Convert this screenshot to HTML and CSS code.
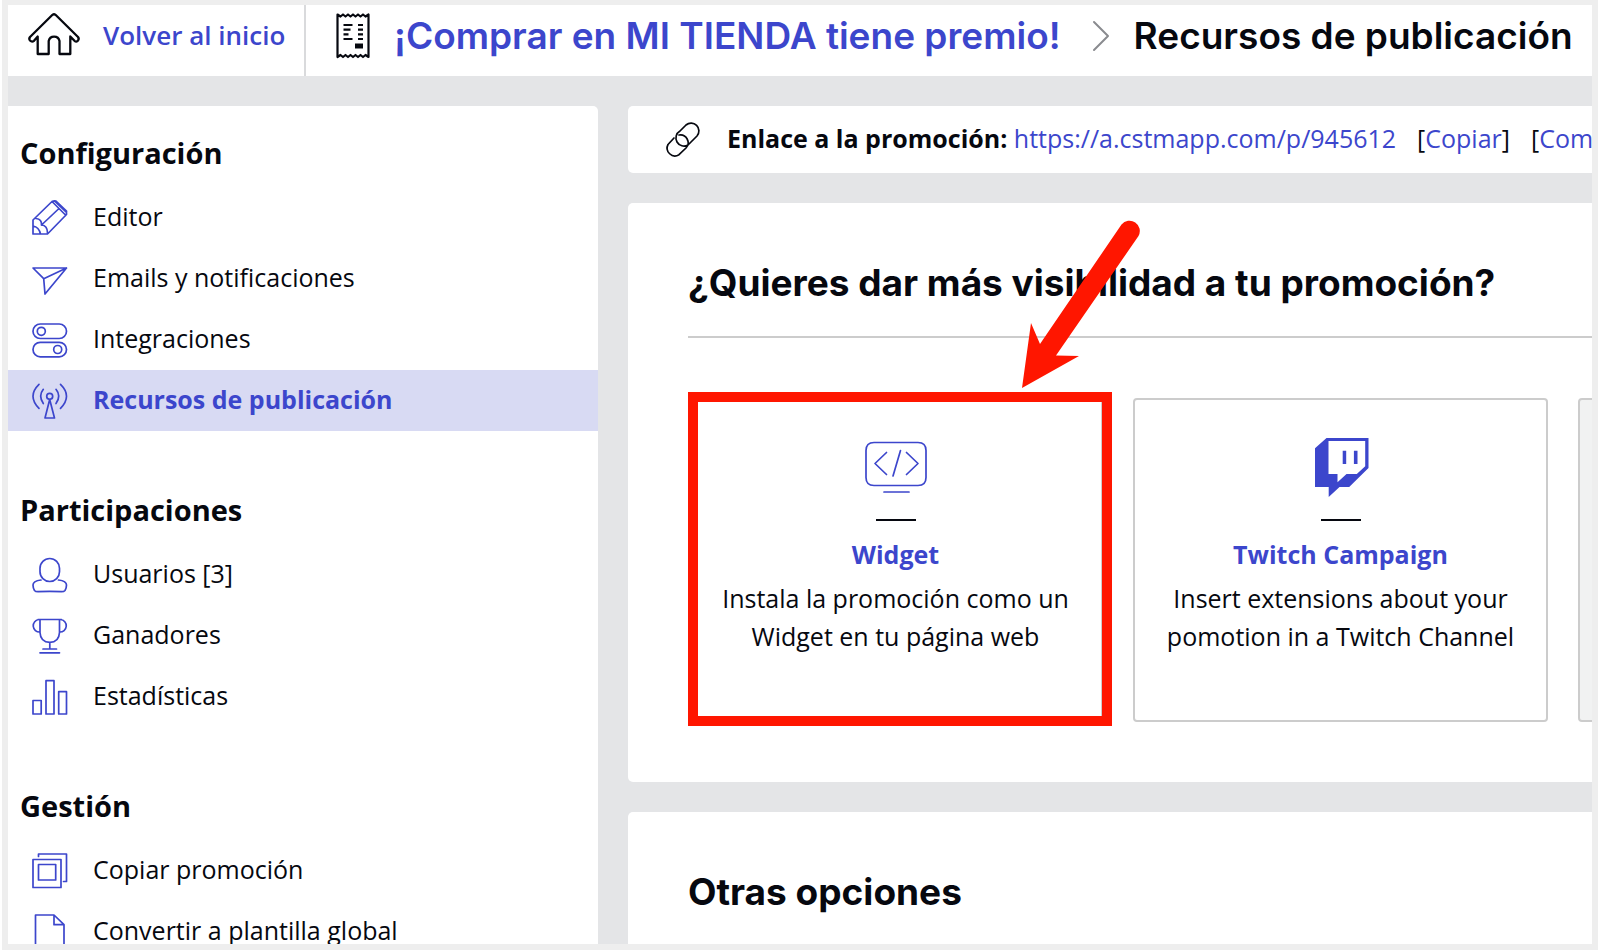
FILE: index.html
```html
<!DOCTYPE html>
<html lang="es">
<head>
<meta charset="utf-8">
<title>Recursos de publicación</title>
<link rel="stylesheet" href="styles.css">
</head>
<body>
<div class="window">
  <header class="topbar">
    <a class="back" href="#">
      <svg class="icon-home" viewBox="0 0 52 43"><path d="M24.5 1.8 2 24Q.6 26 2 27.5 4 29.5 6 27.8L9.7 23.5V41H20.7V28A5.5 5.5 0 0 1 31.5 28V41H42.3V23.5L46.5 27.8Q48.5 29.5 50 27.5 51.4 26 50 24L27.5 1.8Q26 .6 24.5 1.8Z"/></svg>
      <span>Volver al inicio</span>
    </a>
    <nav class="crumbs" aria-label="Ruta">
      <svg class="icon-receipt" viewBox="0 0 34 46"><path d="M1.5 1.5 4.5 3.5 7 1.5 9.5 3.5 12 1.5 14.5 3.5 17 1.5 19.5 3.5 22 1.5 24.5 3.5 27 1.5 29.5 3.5 32.5 1.5V44L29.5 42 27 44 24.5 42 22 44 19.5 42 17 44 14.5 42 12 44 9.5 42 7 44 4.5 42 1.5 44Z"/><path d="M7.5 12h9M7.5 16.700h7M7.5 21.300h5M7.5 26h9M22 12h5M22 16.700h5M22 21.300h5M22 26h5"/><path class="solid" d="M19 30.500h8v5h-8z"/></svg>
      <a href="#">¡Comprar en MI TIENDA tiene premio!</a>
      <svg class="icon-chevron" viewBox="0 0 16 30"><path d="M1 1 15 15 1 29"/></svg>
      <span>Recursos de publicación</span>
    </nav>
  </header>

  <div class="body">
    <nav class="sidebar" aria-label="Promoción">
      <section>
        <h2>Configuración</h2>
        <a class="item" href="#"><svg viewBox="0 0 36 36"><path d="M1 20 20 1.500Q22 .5 24 1L34.500 11V14.500L15.500 34H1ZM20 1.500 33.500 15M22.500 1 34.500 12.500M27 8.500 9.500 25M4 18.500Q10 19 9.500 25 15.500 25.500 15.500 33M1 26Q7 27 8.500 34"/></svg><span>Editor</span></a>
        <a class="item" href="#"><svg viewBox="0 0 36 36"><path d="M1 7H34.500L13 33 11.700 17.700ZM11.700 17.700 34.500 7"/></svg><span>Emails y notificaciones</span></a>
        <a class="item" href="#"><svg viewBox="0 0 36 36"><rect x="1" y="2" width="33.500" height="14.500" rx="7.250"/><rect x="1" y="20.300" width="33.500" height="14.500" rx="7.250"/><circle cx="9.300" cy="9.300" r="4"/><circle cx="25.700" cy="27.500" r="4"/></svg><span>Integraciones</span></a>
        <a class="item active" href="#" aria-current="page"><svg viewBox="0 0 36 36"><circle cx="17.700" cy="13.300" r="3"/><path d="M17.700 16.500 13 35H22.500ZM7 1.300Q-5 13 7 25.300M11.300 6.300Q6 13 11.300 20.500M28.500 1.300Q40.500 13 28.500 25.300M24 6.300Q29.500 13 24 20.500"/></svg><span>Recursos de publicación</span></a>
      </section>
      <section>
        <h2>Participaciones</h2>
        <a class="item" href="#"><svg viewBox="0 0 36 36"><rect x="8" y="1.500" width="19.500" height="23" rx="9.750"/><path d="M9 23Q1 24 1 28 1 31 2.500 33.500 3.500 34.700 6 34.700 17.500 34 29.500 34.700 32 34.700 33 33.500 34.500 31 34.500 28 34.500 24 26.500 23"/></svg><span>Usuarios [3]</span></a>
        <a class="item" href="#"><svg viewBox="0 0 36 36"><path d="M6 1.500H29.500M8 1.500V14.500Q8.500 24.300 17.800 24.300 27 24.300 27.500 14.500V1.500M7 1.500A6.200 6.200 0 0 0 8 14M28.500 1.500A6.200 6.200 0 0 1 27.500 14M17.800 24.300V31M11 31H24.500M8 34.800H27.500"/></svg><span>Ganadores</span></a>
        <a class="item" href="#"><svg viewBox="0 0 36 36"><path d="M1 21.500H9.200V35H1ZM14 1.700H22V35H14ZM26.700 12.700H34.500V35H26.700Z"/></svg><span>Estadísticas</span></a>
      </section>
      <section>
        <h2>Gestión</h2>
        <a class="item" href="#"><svg viewBox="0 0 36 36"><path d="M1 6.500H29V34.500H1ZM6.500 11.500H23.700V27H6.500ZM6.500 3.500V1H34.500V28.500H31.500"/></svg><span>Copiar promoción</span></a>
        <a class="item" href="#"><svg viewBox="0 0 36 36"><path d="M3.500 35V1H22L32 10.700V35ZM22 1V10.700H32"/></svg><span>Convertir a plantilla global</span></a>
      </section>
    </nav>

    <main class="main">
      <div class="panel link-panel">
        <svg viewBox="0 0 36 36"><path d="M15 9 21 3A7.800 7.800 0 0 1 32 14L23 23A7.800 7.800 0 0 1 15 9M9 16 3 22.500A7.800 7.800 0 0 0 14 32.700L21 26A7.800 7.800 0 0 0 14 13"/></svg>
        <p class="link-line">
          <span><strong>Enlace a la promoción:</strong> <a href="#">https://a.cstmapp.com/p/945612</a></span>
          <span>[<a href="#">Copiar</a>]</span>
          <span>[<a href="#">Compartir</a>]</span>
        </p>
      </div>

      <section class="panel">
        <h1 class="ruled">¿Quieres dar más visibilidad a tu promoción?</h1>
        <div class="cards">
          <a class="card marked" href="#">
            <svg class="pic" viewBox="0 0 64 64"><path d="M10 8.500H54Q62 8.500 62 16.500V43.500Q62 51.500 54 51.500H10Q2 51.500 2 43.500V16.500Q2 8.500 10 8.500ZM20 58H45M22.500 18.500 11 29.500 22.500 40.500M36.500 16.500 29 42M42.500 18.500 54 29.500 42.500 40.500"/></svg>
            <i class="dash"></i>
            <b>Widget</b>
            <span class="desc">Instala la promoción como un Widget en tu página web</span>
            <span class="highlight"></span>
            <svg class="arrow" viewBox="0 0 118 169"><path d="M0 168 9 103 18 124 99.500 4.500A10.300 10.300 0 0 1 116.500 16L34 135.500 57 136Z"/></svg>
          </a>
          <a class="card" href="#">
            <svg class="pic filled" viewBox="0 0 64 64"><path fill-rule="evenodd" d="M6 14.300 17.500 4H59.500V34L40.200 53H30.500L19.700 63V53H6ZM19.500 7V40H28.500V48.300L37.500 40H47.800L56.200 32.300V7ZM33.700 16.700H37.200V30H33.700ZM44.900 16.700H48.500V30H44.900Z"/></svg>
            <i class="dash"></i>
            <b>Twitch Campaign</b>
            <span class="desc">Insert extensions about your pomotion in a Twitch Channel</span>
          </a>
          <div class="card disabled"></div>
        </div>
      </section>

      <section class="panel">
        <h1>Otras opciones</h1>
      </section>
    </main>
  </div>
</div>
</body>
</html>
```
FILE: styles.css
```css
* { box-sizing: border-box; }

html { background: #fff; }

body {
  margin: 0;
  padding: 0 0 2px 2px;
  height: 100vh;
  overflow: hidden;
  font: 25px/38px "Open Sans", "Noto Sans", sans-serif;
  color: #06080f;
}

a { color: #3c46cc; text-decoration: none; }

svg {
  flex: none;
  display: block;
  overflow: visible;
  fill: none;
  stroke: currentColor;
  stroke-width: 1.7;
  stroke-linejoin: round;
  stroke-linecap: round;
}

.window {
  height: 100%;
  display: flex;
  flex-direction: column;
  border: 6px solid #eee;
  border-top-width: 5px;
  background: #e4e5e7;
  overflow: hidden;
}

.topbar {
  flex: none;
  display: flex;
  height: 71px;
  background: #fff;
  white-space: nowrap;
}

.back {
  flex: none;
  display: flex;
  align-items: center;
  gap: 23px;
  width: 298px;
  padding: 0 0 12px 20px;
  border-right: 2px solid #d9dadc;
  font-size: 26px;
  font-weight: 600;
}

.icon-home { width: 52px; height: 43px; color: #06080f; stroke-width: 2.3; }

.crumbs {
  display: flex;
  align-items: center;
  padding: 0 0 10px 30px;
  font: 600 37px/50px Inter, "Noto Sans", sans-serif;
}

.icon-receipt { width: 34px; height: 46px; margin-right: 24px; stroke-width: 2.2; stroke-linecap: butt; }
.icon-receipt .solid { fill: currentColor; stroke: none; }
.icon-chevron { width: 16px; height: 30px; margin: 0 25px 0 32px; color: #8a8b8f; stroke-width: 2; }

.body {
  flex: 1;
  min-height: 0;
  display: flex;
  gap: 30px;
  padding-top: 30px;
}

.sidebar {
  flex: none;
  width: 590px;
  display: flex;
  flex-direction: column;
  gap: 32px;
  background: #fff;
  border-radius: 0 5px 0 0;
}

.sidebar h2 {
  margin: 0;
  padding: 27px 12px 14px;
  font-size: 29px;
  line-height: 40px;
  font-weight: 700;
}

.item {
  display: flex;
  align-items: center;
  gap: 25px;
  height: 61px;
  padding-left: 24px;
  color: #06080f;
}

.item svg { width: 36px; height: 36px; color: #3c46cc; }
.item span { padding-bottom: 3px; }
.item.active { background: #d8daf3; color: #3c46cc; font-weight: 700; }

.main {
  flex: 1;
  min-width: 0;
  display: flex;
  flex-direction: column;
  gap: 30px;
}

.panel {
  flex: none;
  padding: 60px 0 60px 60px;
  background: #fff;
  border-radius: 5px 0 0 5px;
}

.link-panel {
  display: flex;
  align-items: center;
  gap: 26px;
  height: 67px;
  padding: 0 0 0 37px;
}

.link-panel svg { width: 36px; height: 36px; }

.link-line {
  margin: 0;
  padding-bottom: 3px;
  display: flex;
  gap: 21px;
  white-space: nowrap;
}

h1 {
  margin: 0;
  font: 700 37px/40px Inter, "Noto Sans", sans-serif;
  white-space: nowrap;
}

.ruled { padding-bottom: 33px; border-bottom: 2px solid #ccc; }

.cards {
  display: grid;
  grid-template-columns: repeat(3, 415px);
  gap: 30px;
  padding-top: 60px;
}

.card {
  position: relative;
  display: flex;
  flex-direction: column;
  align-items: center;
  padding: 34px 16px 65px;
  border: 2px solid #ccc;
  border-radius: 4px;
  text-align: center;
}

.card.disabled { background: #f1f2f2; }

.pic { width: 64px; height: 64px; }
.pic.filled { fill: currentColor; stroke: none; }
.dash { width: 40px; height: 2px; margin: 21px 0 14px; background: #06080f; }
.desc { margin-top: 6px; color: #06080f; }

.highlight {
  position: absolute;
  inset: -8px -11px -6px -2px;
  border: 10px solid #ff1600;
}

.arrow {
  position: absolute;
  left: 332px;
  top: -180px;
  width: 118px;
  height: 169px;
  fill: #ff1600;
  stroke: none;
  pointer-events: none;
}
```
